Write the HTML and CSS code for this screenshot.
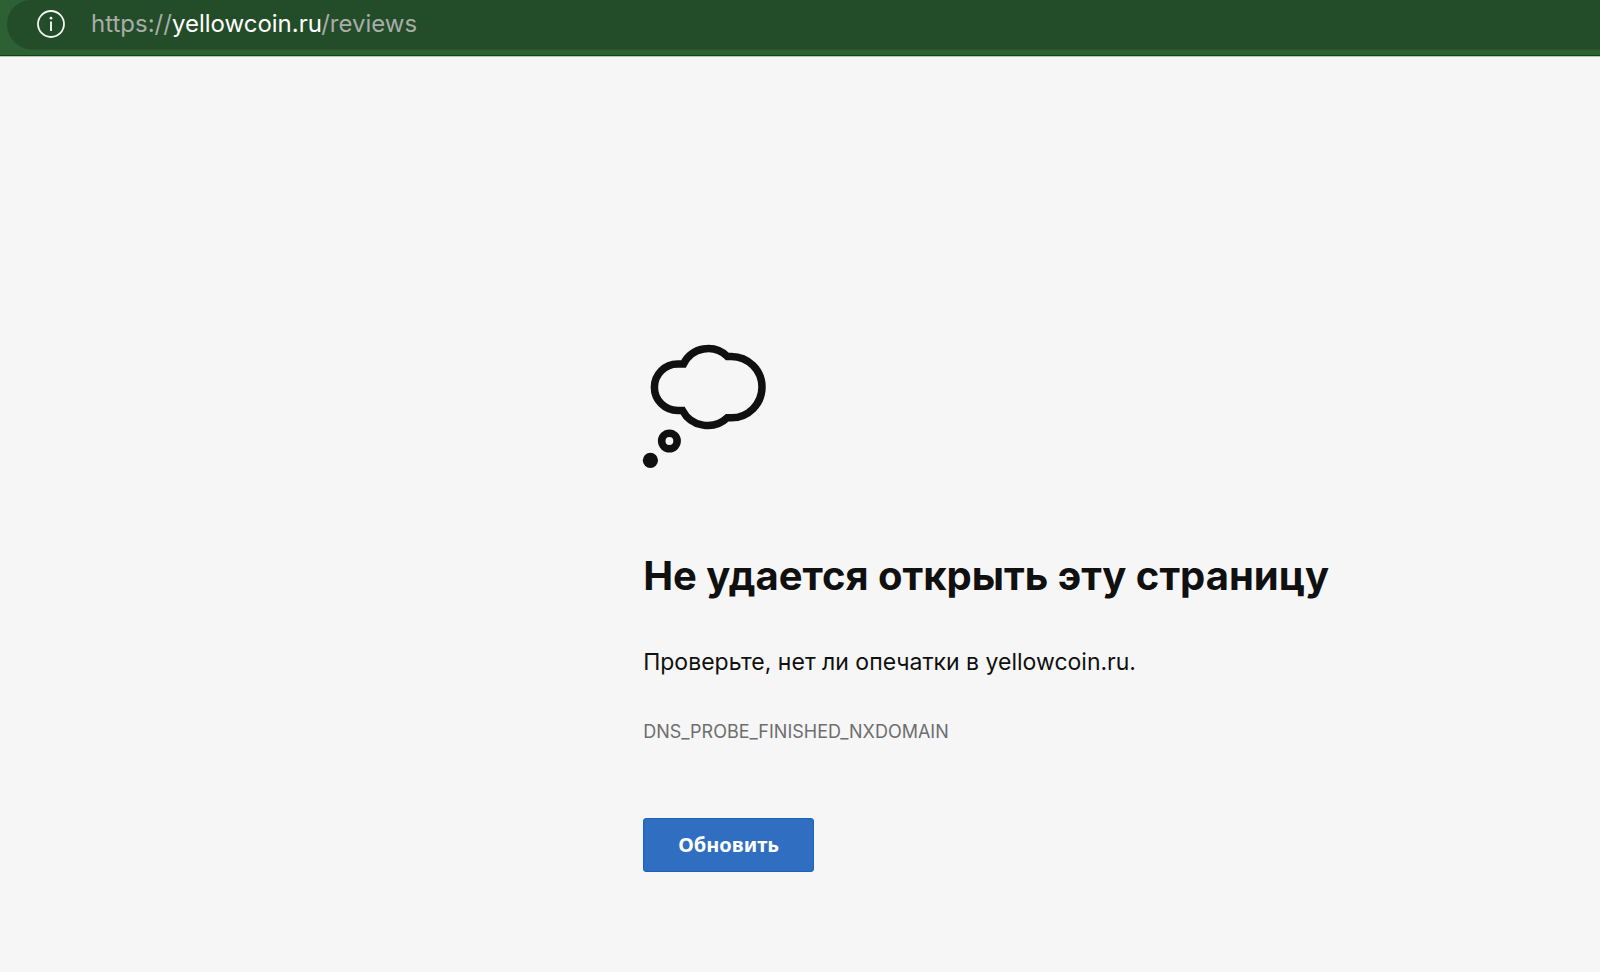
FILE: index.html
```html
<!DOCTYPE html>
<html lang="ru">
<head>
<meta charset="utf-8">
<meta name="viewport" content="width=device-width, initial-scale=1">
<title>yellowcoin.ru</title>
<link rel="stylesheet" href="styles.css">
</head>
<body>
<header class="toolbar">
  <div class="address">
    <button class="info" type="button" aria-label="Сведения о сайте">
      <svg width="28" height="28" viewBox="0 0 28 28" fill="none" aria-hidden="true">
        <circle cx="14" cy="14" r="13" stroke="#f4f7f4" stroke-width="1.8"/>
        <path d="M14 11.5v9.5" stroke="#f4f7f4" stroke-width="1.9"/>
        <circle cx="14" cy="8.2" r="1.4" fill="#f4f7f4"/>
      </svg>
    </button>
    <a class="url" href="#">https://<span class="host">yellowcoin.ru</span>/reviews</a>
  </div>
</header>
<main class="error">
  <svg class="cloud" width="123" height="123" viewBox="0 0 123 123" fill="none" aria-hidden="true">
    <path d="M34.6 19H40.5A27.4 27.4 0 0 1 84.3 11.4H88.3A30.7 30.7 0 0 1 88.3 72.8H84.3A28.6 28.6 0 0 1 39.5 65.4H34.6A23.2 23.2 0 0 1 34.6 19Z" stroke="#101010" stroke-width="7.5"/>
    <circle cx="26.4" cy="96" r="7.7" stroke="#101010" stroke-width="7.6"/>
    <circle cx="7.4" cy="115.3" r="7.6" fill="#101010"/>
  </svg>
  <h1 class="title">Не удается открыть эту страницу</h1>
  <p class="hint">Проверьте, нет ли опечатки в yellowcoin.ru.</p>
  <p class="code">DNS_PROBE_FINISHED_NXDOMAIN</p>
  <button class="reload" type="button">Обновить</button>
</main>
</body>
</html>
```
FILE: styles.css
```css
* {
  box-sizing: border-box;
}

body {
  margin: 0;
  background: #f6f6f6;
  color: #101010;
  font-family: Inter, "Liberation Sans", sans-serif;
}

.toolbar {
  padding: 0 0 5px 7px;
  background: #2d6033;
  border-bottom: 1px solid #064a0d;
  box-shadow: 0 1px 0 #b7c6b8;
}

.address {
  display: flex;
  align-items: center;
  gap: 26px;
  height: 50px;
  padding: 0 30px 2px;
  background: #234c29;
  border-bottom: 1px solid #28532d;
  border-radius: 24px 0 0 26px;
}

.info {
  display: flex;
  padding: 0;
  border: 0;
  background: none;
}

.url {
  color: #a9aca8;
  font-size: 24px;
  line-height: 32px;
  text-decoration: none;
}

.host {
  color: #ffffff;
}

.error {
  display: flex;
  flex-direction: column;
  align-items: flex-start;
  padding: 289px 24px 96px 40.2%;
}

.cloud {
  overflow: visible;
}

.title {
  margin: 84px 0 0;
  font-size: 40px;
  font-weight: 700;
  line-height: 48px;
}

.hint {
  margin: 46px 0 0;
  font-size: 23px;
  line-height: 32px;
}

.code {
  margin: 42px 0 0;
  color: #6e6e6e;
  font-size: 18px;
  line-height: 24px;
}

.reload {
  margin: 74px 0 0;
  padding: 10px 34px;
  border: 1px solid #1c62bf;
  border-radius: 3px;
  background: #2f6ec1;
  color: #ffffff;
  font: 700 20px/32px "Noto Sans", sans-serif;
}
```
